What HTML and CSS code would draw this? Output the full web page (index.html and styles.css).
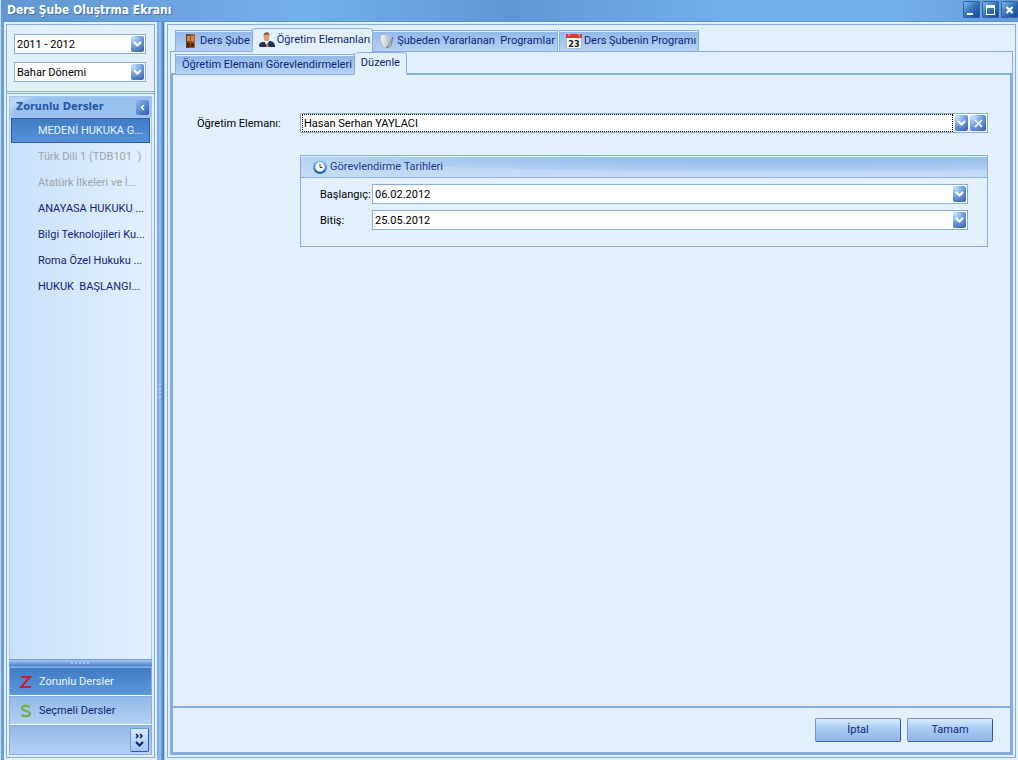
FILE: index.html
```html
<!DOCTYPE html>
<html lang="tr">
<head>
<meta charset="utf-8">
<title>Ders Şube Oluştrma Ekranı</title>
<link rel="stylesheet" href="styles.css">
</head>
<body>
<svg class="defs" aria-hidden="true">
  <defs>
    <linearGradient id="door" x1="0" x2="1"><stop offset="0" stop-color="#70341a"/><stop offset="1" stop-color="#b9682e"/></linearGradient>
    <linearGradient id="ring" x1="0" y1="0" x2="0" y2="1"><stop offset="0" stop-color="#8cc3f2"/><stop offset="1" stop-color="#1c62c4"/></linearGradient>
    <linearGradient id="paper" x1="0" x2="1"><stop offset="0" stop-color="#f8f8f8"/><stop offset="1" stop-color="#b9bcc0"/></linearGradient>
    <symbol id="chevron" viewBox="0 0 9 6"><path d="M1 1l3.500 3.500L8 1" fill="none" stroke="#fff" stroke-width="2"/></symbol>
  </defs>
</svg>
<div class="window">
  <header class="titlebar">
    <h1 class="title">Ders Şube Oluştrma Ekranı</h1>
    <div class="window-controls">
      <button class="win-btn" aria-label="Küçült"><svg width="17" height="17"><path d="M4 12h6v2H4z" fill="#fff"/></svg></button>
      <button class="win-btn" aria-label="Büyüt"><svg width="17" height="17"><path d="M4 4h9v10H4zM5 7v6h7V7z" fill="#fff" fill-rule="evenodd"/></svg></button>
      <button class="win-btn" aria-label="Kapat"><svg width="17" height="17"><path d="M5.500 6l6 6m0-6l-6 6" stroke="#fff" stroke-width="2.200"/></svg></button>
    </div>
  </header>
  <div class="workspace">
    <aside class="sidebar">
      <div class="filters">
        <div class="field"><select class="input" aria-label="Yıl"><option>2011 - 2012</option></select><span class="drop"><svg width="9" height="6"><use href="#chevron"/></svg></span></div>
        <div class="field"><select class="input" aria-label="Dönem"><option>Bahar Dönemi</option></select><span class="drop"><svg width="9" height="6"><use href="#chevron"/></svg></span></div>
      </div>
      <nav class="nav">
        <div class="nav-head"><h2 class="nav-title">Zorunlu Dersler</h2><button class="collapse" aria-label="Daralt"><svg width="5" height="7"><path d="M4 1L1.500 3.500 4 6" fill="none" stroke="#fff" stroke-width="1.500"/></svg></button></div>
        <div class="courses">
          <button class="course selected">MEDENİ HUKUKA G...</button>
          <button class="course" disabled>Türk Dili 1 (TDB101&nbsp; )</button>
          <button class="course" disabled>Atatürk İlkeleri ve İ...</button>
          <button class="course">ANAYASA HUKUKU ...</button>
          <button class="course">Bilgi Teknolojileri Ku...</button>
          <button class="course">Roma Özel Hukuku ...</button>
          <button class="course">HUKUK&nbsp; BAŞLANGI...</button>
        </div>
        <div class="nav-grip"><svg width="19" height="3"><path d="M0 1h19" stroke="#d3e7fb" stroke-width="1" stroke-dasharray="2 2"/></svg></div>
        <button class="nav-group active"><svg width="14" height="14"><path d="M2 2h9L2 12h10" fill="none" stroke="#d01c28" stroke-width="2"/></svg>Zorunlu Dersler</button>
        <button class="nav-group"><svg width="14" height="14"><path d="M11 3C8 1 3 1.500 3 4.500s8 2 8 5-5 3.500-8.500 1.500" fill="none" stroke="#6fb43c" stroke-width="2.200"/></svg>Seçmeli Dersler</button>
        <div class="nav-foot"><button class="more" aria-label="Diğer"><svg width="11" height="15"><path d="M2 1l2 2-2 2M6 1l2 2-2 2" fill="none" stroke="#101e6e" stroke-width="1.500"/><path d="M2 9l3.500 3.500L9 9" fill="none" stroke="#101e6e" stroke-width="2"/></svg></button></div>
      </nav>
    </aside>
    <div class="splitter"><svg width="4" height="14"><path d="M1 0v14" stroke="#c4defa" stroke-width="2" stroke-dasharray="1 3"/></svg></div>
    <main class="main">
      <div class="tabs outer-tabs" role="tablist">
        <button class="tab" role="tab"><svg width="16" height="16"><rect x="4" y="1" width="9" height="14" fill="url(#door)"/><path d="M5 3h3v5H5zM9 3h3v5H9z" fill="#c98a50"/><path d="M5 10h3v4H5zM9 10h3v4H9z" fill="#552410"/></svg>Ders Şube</button>
        <button class="tab current" role="tab" aria-selected="true"><svg width="16" height="16"><path d="M0 14c0-3 2-4 5-4l5-1c4 0 6 2 6 6H1z" fill="#173358"/><path d="M5 9l3 5 2-5z" fill="#fff"/><path d="M8 10l2 5H7z" fill="#e06a20"/><ellipse cx="7.500" cy="5" rx="2.800" ry="4.200" fill="#dc9c72"/><path d="M4.500 4c0-5 6.500-5 6 0l-1-1.500H6z" fill="#735038"/></svg>Öğretim Elemanları</button>
        <button class="tab" role="tab"><svg width="16" height="16"><path d="M2 2h8l-1 10-2 3c-3-2-4-4-5-8z" fill="url(#paper)" stroke="#c5cad0" stroke-width=".5"/><path d="M7 15l5-2 2-9-4 8z" fill="#d1d5d8" stroke="#69717a" stroke-width=".8"/></svg>Şubeden Yararlanan&nbsp; Programlar</button>
        <button class="tab" role="tab"><svg width="16" height="16"><rect x=".5" y="2" width="15" height="13.500" rx="1" fill="#f7f7f5" stroke="#999" stroke-width=".6"/><path d="M0 1h16v4H0z" fill="#d8413a"/><path d="M3 0v3M13 0v3" stroke="#f4c2bc"/><text x="8" y="14" text-anchor="middle" class="cal-day">23</text></svg>Ders Şubenin Programı</button>
      </div>
      <div class="outer-page">
        <div class="tabs inner-tabs" role="tablist">
          <button class="tab" role="tab">Öğretim Elemanı Görevlendirmeleri</button>
          <button class="tab current" role="tab" aria-selected="true">Düzenle</button>
        </div>
        <form class="inner-page">
          <div class="form-body">
            <label class="label" for="teacher">Öğretim Elemanı:</label>
            <div class="field focused"><select class="input" id="teacher"><option>Hasan Serhan YAYLACI</option></select><span class="drop"><svg width="9" height="6"><use href="#chevron"/></svg></span><button type="button" class="clear" aria-label="Temizle"><svg width="9" height="9"><path d="M1 1l7 7m0-7L1 8" stroke="#fff" stroke-width="1.500"/></svg></button></div>
            <section class="group">
              <h3 class="group-head"><svg width="14" height="14"><circle cx="7" cy="7" r="5.800" fill="#fff" stroke="url(#ring)" stroke-width="2.200"/><path d="M7 4v3.500h2.500" fill="none" stroke="#333"/></svg>Görevlendirme Tarihleri</h3>
              <div class="dates">
                <label class="label" for="start">Başlangıç:</label>
                <div class="field"><input class="input" id="start" value="06.02.2012"><button type="button" class="drop" aria-label="Başlangıç seç"><svg width="9" height="6"><use href="#chevron"/></svg></button></div>
                <label class="label" for="end">Bitiş:</label>
                <div class="field"><input class="input" id="end" value="25.05.2012"><button type="button" class="drop" aria-label="Bitiş seç"><svg width="9" height="6"><use href="#chevron"/></svg></button></div>
              </div>
            </section>
          </div>
          <footer class="actions"><button type="button" class="action">İptal</button><button type="button" class="action">Tamam</button></footer>
        </form>
      </div>
    </main>
  </div>
</div>
</body>
</html>
```
FILE: styles.css
```css
* { box-sizing: border-box; }
body { margin: 0; font: 11px/14px Tahoma, Roboto, sans-serif; color: #000; }
button, input, select { font: inherit; margin: 0; padding: 0; border: 0; border-radius: 0; background: none; color: inherit; }
h1, h2, h3 { margin: 0; font-size: 11px; }
svg { display: block; flex: none; }
.defs { position: absolute; width: 0; height: 0; }

.window { height: 100vh; display: flex; flex-direction: column; background: #e2f0fe; border-left: 1px solid #c5ddf7; overflow: hidden; }
.titlebar { flex: none; height: 22px; display: flex; justify-content: space-between; align-items: center; padding: 0 0 2px 6px; background: linear-gradient(90deg, #6296d0, #74afee 30%, #5e98d4 50%, #74afee 72%, #74afee 88%, #659cd6); border-bottom: 1px solid #5a93cf; }
.title { font: bold 12px/16px "DejaVu Sans Condensed", sans-serif; color: #fff; text-shadow: 1px 1px #3e6fb2; }
.window-controls { display: flex; gap: 2px; }
.win-btn { width: 17px; height: 17px; border-radius: 2px; background: linear-gradient(135deg, #8fc4ee, #3c79bd 45%, #123f91); box-shadow: inset 0 0 0 1px #2e62ab; }

.workspace { flex: 1; min-height: 0; display: flex; border-left: 3px solid #6c9fd9; }
.sidebar { flex: none; width: 149px; margin: 2px 0 2px 2px; border: 1px solid #86aee4; display: flex; flex-direction: column; }
.filters { padding: 9px 8px 9px 7px; display: grid; gap: 8px; border-bottom: 1px solid #86aee4; }
.nav { flex: 1; min-height: 0; margin: 1px 0 0; padding: 2px; border-top: 1px solid #86aee4; display: flex; flex-direction: column; }
.nav-head { flex: none; height: 22px; padding: 0 2px 0 6px; display: flex; justify-content: space-between; align-items: center; border: 1px solid #a4c7f0; background: radial-gradient(ellipse 90px 30px at 60% 100%, #9ac1ee 90%, transparent), linear-gradient(#b9d6f7, #c3dcf8); }
.nav-title { font: bold 11px/14px "DejaVu Sans Condensed", sans-serif; color: #2458a8; }
.collapse { width: 13px; height: 15px; display: grid; place-items: center; border-radius: 2px; background: linear-gradient(135deg, #8dbcf0, #2d5bab); }
.courses { flex: 1; min-height: 0; padding: 0 1px; display: flex; flex-direction: column; gap: 1px; border: solid #a9cbf5; border-width: 0 1px; background: linear-gradient(90deg, #c9e1fb, #e2f0fe); }
.course { height: 25px; flex: none; padding: 0 0 0 26px; text-align: left; white-space: nowrap; overflow: hidden; border: 1px solid transparent; color: #101f80; }
.course:disabled { color: #a0a4a8; }
.course.selected { color: #e7f3ff; background: linear-gradient(#407bc4, #5593d8); border-color: #3556a6; }
.nav-grip { flex: none; height: 8px; display: grid; place-items: center; border: solid #6d9fdb; border-width: 1px 0; background: linear-gradient(#a5c9f2, #4a82c6); }
.nav-group { flex: none; height: 29px; display: flex; align-items: center; gap: 6px; padding: 0 9px; border: 1px solid #86aee4; border-bottom: 1px solid #f4faff; color: #101f80; background: linear-gradient(#92b9e9, #b5d1f2); }
.nav-group.active { color: #eaf5ff; background: linear-gradient(#407bc4, #5c98da); }
.nav-foot { flex: none; height: 30px; padding: 2px; display: flex; justify-content: flex-end; border: 1px solid #86aee4; background: linear-gradient(#92b9e9, #b5d1f2); }
.more { width: 19px; height: 24px; display: grid; place-items: center; border: 1px solid #6f9bd6; border-right-color: #3556a6; border-bottom-color: #3556a6; border-radius: 2px; background: linear-gradient(#d6e9fd, #a1c4ef); }
.splitter { flex: none; width: 8px; margin: 0 2px; display: grid; place-items: center; background: linear-gradient(90deg, #86aee4 2px, #a9d0f6 3px, #74a7e0 4px, #3d6fb4 7px, #a9cbf5 7px); }

.field { display: flex; align-items: center; height: 20px; padding: 1px; gap: 2px; border: 1px solid #86aee4; background: #fff; min-width: 0; }
.input { flex: 1; min-width: 0; width: 0; height: 16px; padding: 0 1px; line-height: 14px; appearance: none; outline: 0; }
select.input { padding-top: 1px; }
.drop, .clear { flex: none; width: 13px; height: 16px; display: grid; place-items: center; border-radius: 2px; background: radial-gradient(circle at 15% 10%, #c4e3fc, #6798d6 55%, #3556a6); }
.clear { width: 16px; }
.focused .input { border: 1px dotted #000; height: 18px; }

.main { flex: 1; min-width: 0; margin: 2px 2px 2px 0; padding: 3px 2px 2px; border: 1px solid #86aee4; display: flex; flex-direction: column; }
.tabs { flex: none; display: flex; align-items: flex-end; padding: 0 5px; margin-bottom: -1px; position: relative; }
.tab { height: 22px; flex: none; display: flex; align-items: center; gap: 2px; padding: 0 2px 0 6px; white-space: nowrap; color: #101f80; border: 1px solid #86aee4; background: linear-gradient(#8fb8ea, #b7d2f3); box-shadow: inset 0 1px #e2f0fe; }
.tab + .tab { margin-left: -1px; }
.tab.current { height: 24px; padding-bottom: 1px; border-bottom-color: #e2f0fe; border-radius: 8px 8px 0 0 / 2px 2px 0 0; background: #e2f0fe; }
.tab.current + .tab + .tab { margin-left: 1px; }
.cal-day { font: bold 9px "DejaVu Sans Condensed", sans-serif; fill: #222; }
.outer-page { flex: 1; min-height: 0; display: flex; flex-direction: column; border: 1px solid #86aee4; border-bottom: 0; }
.inner-tabs { padding: 0 4px; margin-bottom: -2px; }
.inner-tabs .tab { height: 21px; padding: 0 2px 0 6px; }
.inner-tabs .tab.current { height: 23px; padding: 0 6px; border-bottom: 2px solid #e2f0fe; }
.inner-page { flex: 1; min-height: 0; display: flex; flex-direction: column; border: solid #86aee4; border-width: 2px 2px 3px; }
.form-body { flex: 1; min-height: 0; padding: 38px 22px 0 24px; display: grid; grid-template-columns: 103px minmax(0, 1fr); align-content: start; row-gap: 22px; }
.label { align-self: center; padding-top: 2px; }
.group { grid-column: 2; border: 1px solid #86aee4; padding-bottom: 16px; }
.group-head { height: 22px; padding: 0 12px; display: flex; align-items: center; gap: 3px; font-weight: normal; color: #1b3595; border-bottom: 1px solid #86aee4; box-shadow: inset 0 1px #e2f0fe; background: radial-gradient(ellipse 70% 16px at 70% 0, #98c0ee 40%, #b2cff2 95%, transparent), linear-gradient(#b3d0f3, #c7dcf5); }
.dates { padding: 6px 19px 0; display: grid; grid-template-columns: 52px minmax(0, 1fr); row-gap: 6px; align-items: center; }
.actions { flex: none; display: flex; justify-content: flex-end; gap: 6px; padding: 10px 17px; border-top: 2px solid #86aee4; }
.action { width: 86px; height: 24px; border: 1px solid #6f94cd; border-right-color: #3556a6; border-bottom-color: #3f5fae; border-radius: 2px; color: #101f80; background: linear-gradient(#d8eafd, #a9cbf3 45%, #8fb5e7); }
```
